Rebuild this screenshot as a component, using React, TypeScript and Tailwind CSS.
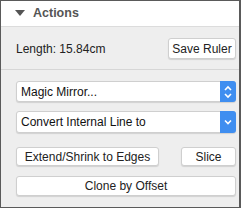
import React from "react";

const font = { fontFamily: '"Liberation Sans", Arial, sans-serif' };

function Btn({ label, className }: { label: string; className?: string }) {
  return (
    <button
      className={
        "flex items-center justify-center rounded-[3px] border border-[#cfcfcf] bg-white text-[12px] text-[#222] shadow-[0_1px_1px_rgba(0,0,0,0.12)] " +
        (className ?? "")
      }
    >
      {label}
    </button>
  );
}

function FakeSelect({ label, both }: { label: string; both?: boolean }) {
  return (
    <div className="flex h-full items-stretch rounded-[3px] border border-[#cfcfcf] bg-white shadow-[0_1px_1px_rgba(0,0,0,0.12)]">
      <div className="flex flex-1 items-center pl-[4px] text-[12px] text-[#111]">{label}</div>
      <div className="-my-px -mr-px flex w-[16px] items-center justify-center rounded-r-[3px] bg-[#3f8ef0]">
        {both ? (
          <svg width="10" height="16" viewBox="0 0 10 16" fill="none" stroke="white" strokeWidth="1.6">
            <path d="M2 6 L5 3 L8 6" />
            <path d="M2 10 L5 13 L8 10" />
          </svg>
        ) : (
          <svg width="10" height="10" viewBox="0 0 10 10" fill="none" stroke="white" strokeWidth="1.6">
            <path d="M2 3.5 L5 6.5 L8 3.5" />
          </svg>
        )}
      </div>
    </div>
  );
}

export default function App() {
  return (
    <div
      style={font}
      className="flex h-[208px] w-[241px] flex-col border-t border-l border-b border-r-2 border-[#5a5a5a] bg-[#eeeeee]"
    >
      <div className="flex h-[26px] items-center border-b border-[#dcdcdc] bg-white pl-[14px]">
        <svg width="11" height="7" viewBox="0 0 11 7" className="mt-[-1px]">
          <path d="M0 0 H10 L5 6 Z" fill="#555" />
        </svg>
        <span className="ml-[7px] text-[12.5px] font-bold text-[#555]">Actions</span>
      </div>

      <div className="mt-[11px] flex h-[21px] items-center justify-between pl-[15px] pr-[3px]">
        <span className="text-[12px] text-[#222]">Length: 15.84cm</span>
        <Btn label="Save Ruler" className="h-[21px] w-[68px]" />
      </div>

      <div className="mt-[10px] h-px bg-[#d6d6d6]" />

      <div className="flex flex-col px-[15px] pr-[3px]">
        <div className="mt-[11px] h-[21px]">
          <FakeSelect label="Magic Mirror..." both />
        </div>
        <div className="mt-[9px] h-[22px]">
          <FakeSelect label="Convert Internal Line to" />
        </div>
        <div className="mt-[14px] flex h-[19px] justify-between">
          <Btn label="Extend/Shrink to Edges" className="w-[143px]" />
          <Btn label="Slice" className="w-[55px]" />
        </div>
        <Btn label="Clone by Offset" className="mt-[10px] h-[20px] w-full" />
      </div>
    </div>
  );
}
